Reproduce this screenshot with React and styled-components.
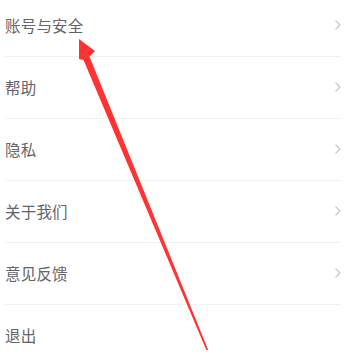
import React from "react";
import styled, { createGlobalStyle } from "styled-components";

const Global = createGlobalStyle`
  html, body { margin: 0; padding: 0; background: #ffffff; }
  body { width: 349px; height: 354px; overflow: hidden; }
`;

const Page = styled.div`
  position: relative;
  width: 349px;
  height: 354px;
  overflow: hidden;
  background: #fff;
  font-family: "Noto Sans CJK SC", "Noto Sans", sans-serif;
`;

const List = styled.div`
  display: flex;
  flex-direction: column;
  margin-top: -5px;
`;

const Row = styled.div`
  box-sizing: border-box;
  height: 62px;
  margin: 0 8px 0 5px;
  display: flex;
  align-items: center;
  justify-content: space-between;
  border-bottom: 1px solid ${(p) => (p.$last ? "transparent" : "#f1f1f3")};
`;

const Label = styled.span`
  font-size: 15.5px;
  font-weight: 400;
  color: #63646d;
  letter-spacing: 0.2px;
  line-height: 1;
`;

const Chevron = styled.svg`
  width: 6px;
  height: 10px;
  display: block;
  margin-top: -2px;
`;

const Overlay = styled.svg`
  position: absolute;
  left: 0;
  top: 0;
  pointer-events: none;
`;

const items = ["账号与安全", "帮助", "隐私", "关于我们", "意见反馈", "退出"];

export default function App() {
  return (
    <Page>
      <Global />
      <List>
        {items.map((t, i) => (
          <Row key={t} $last={i === items.length - 1}>
            <Label>{t}</Label>
            {i < items.length - 1 && (
              <Chevron viewBox="0 0 6 10">
                <polyline
                  points="0.8,0.8 5,5 0.8,9.2"
                  fill="none"
                  stroke="#bfc6d2"
                  strokeWidth="1.2"
                  strokeLinecap="round"
                  strokeLinejoin="round"
                />
              </Chevron>
            )}
          </Row>
        ))}
      </List>
      <Overlay width="349" height="354" viewBox="0 0 349 354">
        <polygon
          points="79,39 95,51 89.5,56.5 208.2,350 206.3,350 83.5,60 79,59"
          fill="#ff3333"
        />
      </Overlay>
    </Page>
  );
}
